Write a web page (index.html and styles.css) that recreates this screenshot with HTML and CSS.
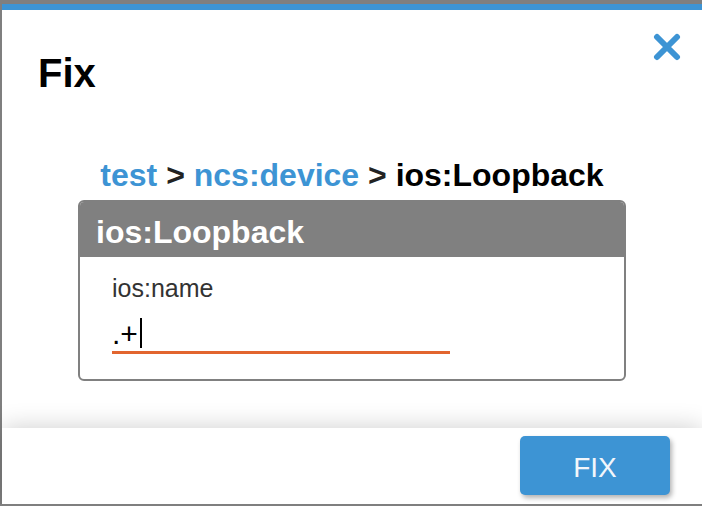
FILE: index.html
```html
<!DOCTYPE html>
<html lang="en">
<head>
    <meta charset="UTF-8">
    <meta name="viewport" content="width=device-width, initial-scale=1.0">
    <title>Fix</title>
    <link rel="stylesheet" href="styles.css">
</head>
<body>

    <div class="modal">
        <!-- En-tete -->
        <div class="modal-header">
            <h1>Fix</h1>
            <a class="close" href="#" aria-label="Close">
                <svg width="28" height="28" viewBox="0 0 28 28">
                    <path d="M4 4 L24 24 M24 4 L4 24" stroke="#3d94d4" stroke-width="6" stroke-linecap="round" fill="none"/>
                </svg>
            </a>
        </div>

        <!-- Contenu -->
        <div class="modal-body">
            <p class="breadcrumb">
                <a href="#">test</a> &gt; <a href="#">ncs:device</a> &gt; <span class="current">ios:Loopback</span>
            </p>

            <div class="panel">
                <div class="panel-title">ios:Loopback</div>
                <div class="panel-content">
                    <label class="field-label">ios:name</label>
                    <div class="field-input">.+<span class="caret"></span></div>
                </div>
            </div>
        </div>

        <!-- Pied -->
        <div class="modal-footer">
            <button class="btn-fix">FIX</button>
        </div>
    </div>

</body>
</html>
```

FILE: styles.css
```css
/* Fond gris derriere la fenetre */
body {
    margin: 0;
    background: #7f7f7f;
    font-family: "Liberation Sans", Arial, sans-serif;
    overflow: hidden;
}
.modal {
    margin: 4px 0 0 2px;
    width: 700px;
    height: 494px;
    background: white;
    border-top: 6px solid #3d94d4;
    display: flex;
    flex-direction: column;
}
.modal-header {
    position: relative;
    height: 94px;
    flex-shrink: 0;
}
.modal-header h1 {
    margin: 0;
    padding: 40px 0 0 36px;
    font-size: 40px;
    line-height: 46px;
    color: black;
}
.close {
    position: absolute;
    top: 23px;
    right: 21px;
}
.close svg {
    display: block;
}
.modal-body {
    flex: 1;
    padding-top: 53px;
}
.breadcrumb {
    margin: 0 0 6px;
    text-align: center;
    font-size: 32px;
    line-height: 37px;
    font-weight: bold;
    color: #222;
}
.breadcrumb a {
    color: #3d94d4;
    text-decoration: none;
}
.breadcrumb .current {
    color: black;
}
.panel {
    width: 544px;
    margin: 0 auto;
    border: 2px solid #808080;
    border-radius: 6px;
    overflow: hidden;
}
.panel-title {
    background: #808080;
    color: white;
    font-size: 32px;
    font-weight: bold;
    line-height: 37px;
    height: 55px;
    box-sizing: border-box;
    padding: 12px 0 0 16px;
}
.panel-content {
    padding: 17px 32px 25px;
}
.field-label {
    display: block;
    font-size: 25px;
    line-height: 29px;
    color: #333;
}
.field-input {
    width: 338px;
    margin-top: 14px;
    font-size: 30px;
    line-height: 34px;
    color: black;
    border-bottom: 3px solid #e2652f;
}
.caret {
    display: inline-block;
    width: 2px;
    height: 30px;
    margin-left: 2px;
    vertical-align: -4px;
    background: black;
}
.modal-footer {
    position: relative;
    height: 76px;
    flex-shrink: 0;
    background: white;
    box-shadow: 0 0 24px rgba(0, 0, 0, 0.2);
    display: flex;
    justify-content: flex-end;
    align-items: flex-start;
    padding: 8px 32px 0 0;
    box-sizing: border-box;
}
.btn-fix {
    width: 150px;
    height: 59px;
    background: #3d94d4;
    color: #f2f6fb;
    border: none;
    border-radius: 5px;
    font-family: "Liberation Sans", Arial, sans-serif;
    font-size: 28px;
    padding-top: 6px;
    box-shadow: 2px 3px 5px rgba(0, 0, 0, 0.3);
    cursor: pointer;
}
```
